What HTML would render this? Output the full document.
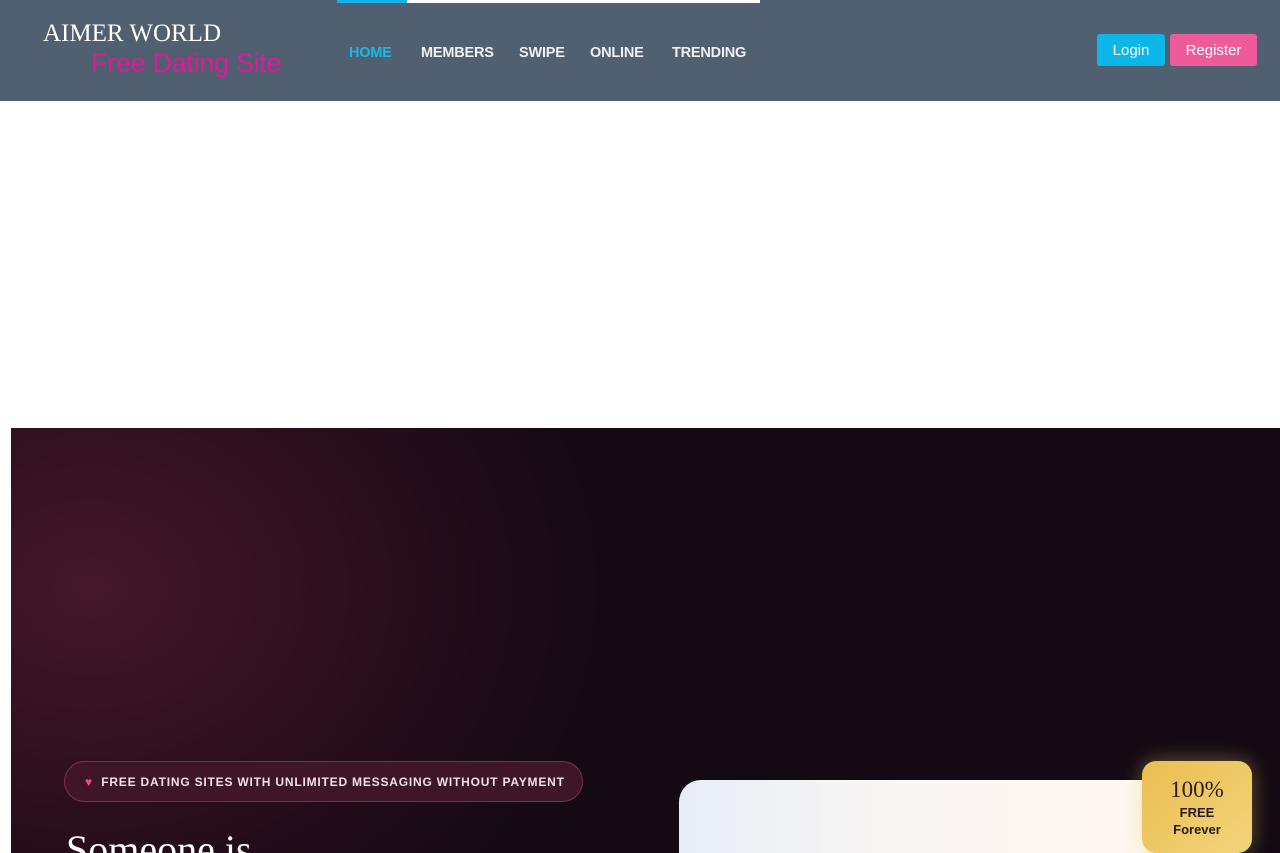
<!DOCTYPE html>
<html><head><style>
html,body{margin:0;width:1280px;height:853px;overflow:hidden}
body{background:#fff;font-family:"Liberation Sans",sans-serif;position:relative}
.hdr{position:absolute;left:0;top:0;width:1280px;height:101px;background:#506070}
.bar{position:absolute;top:0;left:337px;width:423px;height:3px;background:#fff}
.bar i{position:absolute;left:0;top:0;width:70px;height:3px;background:#14b4e6}
.l1{position:absolute;left:43px;top:20px;font-family:"Liberation Serif",serif;font-size:25px;color:#fff}
.l2{position:absolute;left:91px;top:48px;font-size:27px;color:#e0199a;letter-spacing:-.3px}
.nav{position:absolute;top:45px;font-size:14.5px;font-weight:bold;color:#f0f0f0;letter-spacing:-.2px}
.btn{position:absolute;top:34px;height:32px;border-radius:3px;color:#fff;font-size:15px;line-height:33px;text-align:center}
.hero{position:absolute;left:11px;top:428px;width:1269px;height:425px;background:radial-gradient(ellipse 520px 420px at 80px 160px,#45182a 0%,#2a0e1c 55%,#140a14 100%)}
.pill{position:absolute;left:64px;top:761px;width:519px;height:41px;border:1px solid #7a2e4c;border-radius:21px;background:#3f1628;color:#f0e0e8;font-size:12px;font-weight:bold;letter-spacing:.8px;line-height:40px;box-sizing:border-box;padding-left:20px}
.card{position:absolute;left:679px;top:780px;width:560px;height:73px;border-radius:22px 22px 0 0;background:linear-gradient(90deg,#e8eef6,#faf6f4 40%,#fff8ee)}
.badge{position:absolute;left:1142px;top:761px;width:110px;height:92px;border-radius:14px;background:linear-gradient(135deg,#eabd50,#f3d47c);text-align:center;color:#2a1a10;box-shadow:0 0 20px rgba(240,200,90,.4)}
</style></head><body>
<div class="hdr">
<div class="bar"><i></i></div>
<div class="l1">AIMER WORLD</div>
<div class="l2">Free Dating Site</div>
<div class="nav" style="left:349px;color:#1ab8ea">HOME</div>
<div class="nav" style="left:421px">MEMBERS</div>
<div class="nav" style="left:519px">SWIPE</div>
<div class="nav" style="left:590px">ONLINE</div>
<div class="nav" style="left:672px">TRENDING</div>
<div class="btn" style="left:1097px;width:68px;background:#0cb6e8">Login</div>
<div class="btn" style="left:1170px;width:87px;background:#ee5b9a">Register</div>
</div>
<div class="hero"></div>
<div class="pill"><span style="color:#e8508c">♥</span>&nbsp;&nbsp;FREE DATING SITES WITH UNLIMITED MESSAGING WITHOUT PAYMENT</div>
<div style="position:absolute;left:66px;top:826px;font-family:'Liberation Serif',serif;font-size:40px;color:#fff">Someone is</div>
<div class="card"></div>
<div class="badge"><div style="font-family:'Liberation Serif',serif;font-size:23px;margin-top:16px">100%</div><div style="font-size:13px;font-weight:bold;margin-top:2px">FREE</div><div style="font-size:13px;font-weight:bold;margin-top:2px">Forever</div></div>
</body></html>
